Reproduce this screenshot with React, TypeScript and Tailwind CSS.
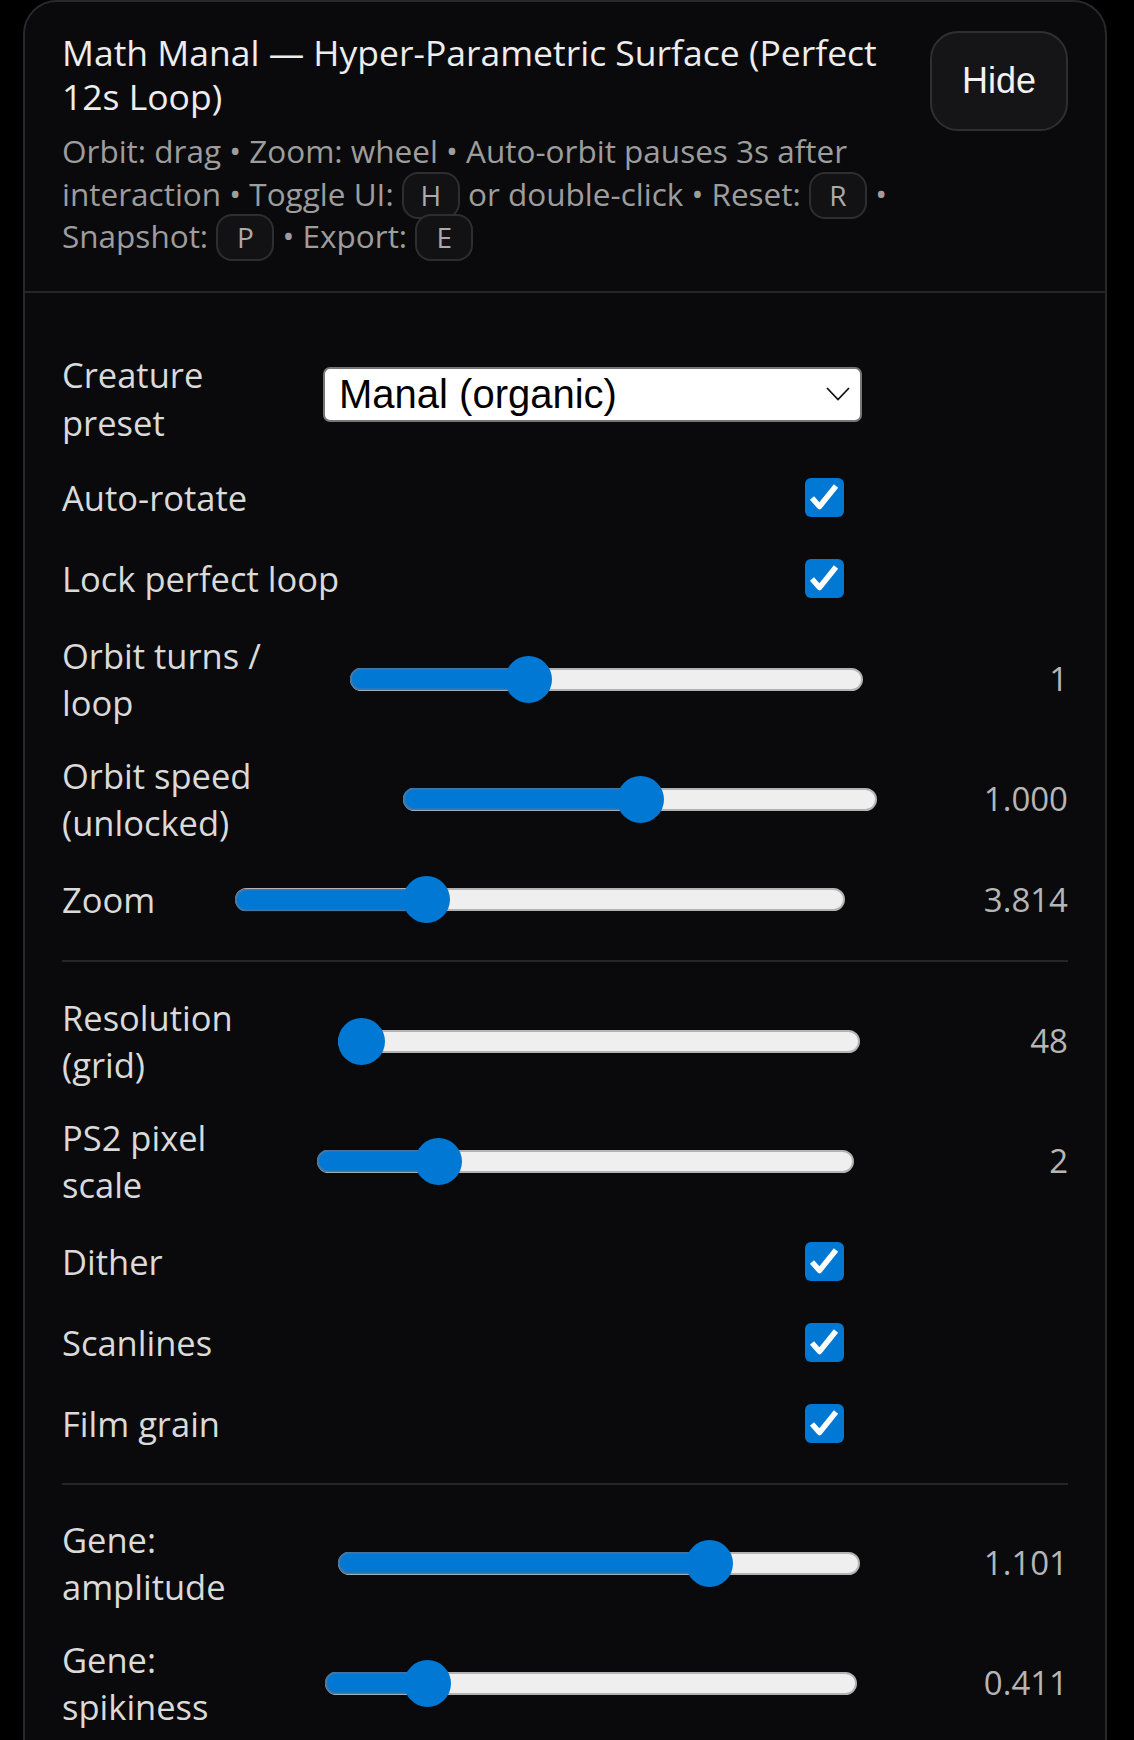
import React from "react";

type SliderRow = {
	label: string;
	labelW: string;
	trackW: string;
	frac: number;
	value: string;
	tall?: boolean;
};

function Checkbox() {
	return (
		<div className="flex h-[39px] w-[39px] shrink-0 items-center justify-center rounded-[6px] bg-[#0078d4]">
			<svg width="39" height="39" viewBox="0 0 39 39" fill="none">
				<path d="M7 20 L14.5 28.5 L31 8" stroke="white" strokeWidth="5.5" strokeLinejoin="round" />
			</svg>
		</div>
	);
}

function Slider({ frac }: { frac: number }) {
	return (
		<div className="relative flex h-[47px] w-full items-center">
			<div className="h-[23px] w-full rounded-full border-[2.5px] border-[#b3b3b3] bg-[#efefef]" />
			{frac > 0 && (
				<div
					className="absolute left-0 top-1/2 h-[23px] -translate-y-1/2 rounded-l-full border-[2.5px] border-r-0 border-[#3f77a8] bg-[#0078d4]"
					style={{ width: `calc(${frac} * (100% - 47px) + 23.5px)` }}
				/>
			)}
			<div
				className="absolute top-0 h-[47px] w-[47px] rounded-full bg-[#0078d4]"
				style={{ left: `calc(${frac} * (100% - 47px))` }}
			/>
		</div>
	);
}

function SliderLine({ row }: { row: SliderRow }) {
	return (
		<div className={`flex items-center ${row.tall ? "h-[95px]" : "h-[56px]"}`}>
			<div className={`${row.labelW} shrink-0 whitespace-pre-line text-[34.5px] leading-[47.5px] text-[#dadada]`}>
				{row.label}
			</div>
			<div className={`${row.trackW} shrink-0`}>
				<Slider frac={row.frac} />
			</div>
			<div className="flex-1 text-right text-[33px] leading-[46px] text-[#b6b6b6]">{row.value}</div>
		</div>
	);
}

function CheckLine({ label }: { label: string }) {
	return (
		<div className="flex h-[56px] items-center">
			<div className="w-[743px] shrink-0 text-[34.5px] leading-[47.5px] text-[#dadada]">{label}</div>
			<Checkbox />
		</div>
	);
}

function Kbd({ k }: { k: string }) {
	return (
		<span className="-my-[6px] inline-block w-[58px] rounded-[16px] border-2 border-[#2e2e31] bg-[#121214] pt-[7px] pb-[8px] text-center text-[28px] leading-[28px] text-[#ababab]">
			{k}
		</span>
	);
}

const orbitRows: SliderRow[] = [
	{ label: "Orbit turns /\nloop", labelW: "w-[288px]", trackW: "w-[513px]", frac: 0.333, value: "1", tall: true },
	{ label: "Orbit speed\n(unlocked)", labelW: "w-[341px]", trackW: "w-[474px]", frac: 0.5, value: "1.000", tall: true },
	{ label: "Zoom", labelW: "w-[173px]", trackW: "w-[610px]", frac: 0.298, value: "3.814" },
];

const renderRows: SliderRow[] = [
	{ label: "Resolution\n(grid)", labelW: "w-[276px]", trackW: "w-[522px]", frac: 0, value: "48", tall: true },
	{ label: "PS2 pixel\nscale", labelW: "w-[255px]", trackW: "w-[537px]", frac: 0.2, value: "2", tall: true },
];

const geneRows: SliderRow[] = [
	{ label: "Gene:\namplitude", labelW: "w-[276px]", trackW: "w-[522px]", frac: 0.733, value: "1.101", tall: true },
	{ label: "Gene:\nspikiness", labelW: "w-[263px]", trackW: "w-[532px]", frac: 0.163, value: "0.411", tall: true },
];

export default function App() {
	return (
		<div className="min-h-[1740px] bg-black pl-[23px] pr-[27px] font-['Open_Sans',sans-serif]">
			<div className="rounded-[34px] border-2 border-[#29292d] bg-[#0a0a0c] pb-[80px]">
				<header className="flex items-start gap-[25px] border-b-2 border-[#26262a] px-[37px] pt-[29px] pb-[33px]">
					<div className="flex-1">
						<h1 className="text-[35.5px] font-normal leading-[43.5px] text-[#ededed]">
							Math Manal — Hyper-Parametric Surface (Perfect 12s Loop)
						</h1>
						<p className="mt-[12px] text-[31.5px] leading-[42.5px] text-[#9d9d9d]">
							Orbit: drag • Zoom: wheel • Auto-orbit pauses 3s after interaction • Toggle UI: <Kbd k="H" /> or
							double-click • Reset: <Kbd k="R" /> • Snapshot: <Kbd k="P" /> • Export: <Kbd k="E" />
						</p>
					</div>
					<button
						type="button"
						className="flex h-[100px] w-[138px] shrink-0 items-center justify-center rounded-[28px] border-2 border-[#2f2f33] bg-[#151518] font-['Liberation_Sans',Arial,sans-serif] text-[36px] text-[#f2f2f2]"
					>
						Hide
					</button>
				</header>

				<div className="px-[37px] pt-[54px]">
					<div className="flex flex-col gap-[25px]">
						<div className="flex h-[95px] items-center">
							<div className="mt-[9px] w-[261px] shrink-0 text-[34.5px] leading-[47.5px] text-[#dadada]">
								Creature
								<br />
								preset
							</div>
							<div className="flex h-[55px] w-[539px] items-center justify-between rounded-[7px] border-[2.5px] border-[#767676] bg-white pl-[14px] pr-[10px] font-['Liberation_Sans',Arial,sans-serif] text-[40px] text-black">
								<span>Manal (organic)</span>
								<svg width="24" height="14" viewBox="0 0 24 14" fill="none">
									<path d="M1 1 L12 12.5 L23 1" stroke="#111" strokeWidth="1.8" />
								</svg>
							</div>
						</div>
						<div className="mt-[3px]">
							<CheckLine label="Auto-rotate" />
						</div>
						<CheckLine label="Lock perfect loop" />
						{orbitRows.map((r) => (
							<SliderLine key={r.label} row={r} />
						))}
					</div>

					<div className="my-[32px] h-[2px] bg-[#26262a]" />

					<div className="flex flex-col gap-[25px]">
						{renderRows.map((r) => (
							<SliderLine key={r.label} row={r} />
						))}
						<CheckLine label="Dither" />
						<CheckLine label="Scanlines" />
						<CheckLine label="Film grain" />
					</div>

					<div className="my-[31px] h-[2px] bg-[#26262a]" />

					<div className="flex flex-col gap-[25px]">
						{geneRows.map((r) => (
							<SliderLine key={r.label} row={r} />
						))}
					</div>
				</div>
			</div>
		</div>
	);
}
